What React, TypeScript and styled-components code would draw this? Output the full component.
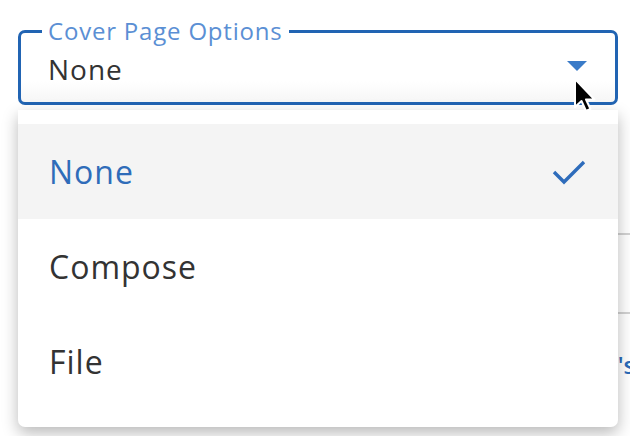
import styled, { createGlobalStyle } from "styled-components";

const options = ["None", "Compose", "File"];
const selected = "None";

function App() {
  return (
    <>
      <GlobalStyle />
      <Page>
        <Field>
          <Legend>Cover Page Options</Legend>
          <ValueRow>
            <Value>{selected}</Value>
            <Caret />
          </ValueRow>
        </Field>

        <Backdrop>
          <BackRow $height={128} />
          <BackRow $height={77} />
          <BackRow $height={100}>
            <BackLink>User's settings</BackLink>
          </BackRow>
        </Backdrop>

        <Menu>
          {options.map((o) => (
            <Option key={o} $active={o === selected}>
              {o}
              {o === selected && (
                <svg width="34" height="26" viewBox="0 0 34 26">
                  <path
                    d="M2 13 L12 23 L32 3"
                    fill="none"
                    stroke="#2e6cbb"
                    strokeWidth="3.4"
                  />
                </svg>
              )}
            </Option>
          ))}
        </Menu>

        <Cursor width="24" height="38" viewBox="0 0 24 38">
          <path
            d="M2 2 L2 30 L8.5 24 L13 34 L17.5 32 L13 22.5 L21.5 22.5 Z"
            fill="#000"
            stroke="#fff"
            strokeWidth="2"
            strokeLinejoin="round"
          />
        </Cursor>
      </Page>
    </>
  );
}

const GlobalStyle = createGlobalStyle`
  body {
    margin: 0;
    background: #fff;
    font-family: "Open Sans", "Noto Sans", sans-serif;
  }
`;

const Page = styled.div`
  position: relative;
  width: 630px;
  height: 436px;
  overflow: hidden;
  padding: 19px 0 0 18px;
  box-sizing: border-box;
`;

const Field = styled.fieldset`
  width: 600px;
  box-sizing: border-box;
  margin: 0;
  padding: 7px 28px 14px 27px;
  border: 3px solid #2164b3;
  border-radius: 7px;
  background: linear-gradient(to bottom, #fff 70%, #f6f6f6);
`;

const Legend = styled.legend`
  margin-left: -6px;
  padding: 0 6px;
  font-size: 24px;
  line-height: 24px;
  letter-spacing: 0.8px;
  color: #5b8fd4;
`;

const ValueRow = styled.div`
  display: flex;
  align-items: center;
  justify-content: space-between;
  height: 38px;
`;

const Value = styled.span`
  font-size: 28px;
  line-height: 38px;
  letter-spacing: 1px;
  color: #333;
`;

const Caret = styled.span`
  width: 0;
  height: 0;
  margin-top: -6px;
  border-left: 10px solid transparent;
  border-right: 10px solid transparent;
  border-top: 10px solid #3a7bc8;
`;

const Backdrop = styled.div`
  display: flex;
  flex-direction: column;
`;

const BackRow = styled.div<{ $height: number }>`
  height: ${(p) => p.$height}px;
  border-bottom: 2px solid #d2d2d2;
  display: flex;
  align-items: center;

  &:last-child {
    border-bottom: none;
  }
`;

const BackLink = styled.span`
  margin-left: 546px;
  white-space: nowrap;
  font-size: 24px;
  font-weight: 600;
  color: #2a6ab8;
`;

const Menu = styled.ul`
  position: absolute;
  top: 110px;
  left: 18px;
  width: 600px;
  margin: 0;
  padding: 14px 0 18px;
  list-style: none;
  background: #fff;
  border-radius: 0 0 7px 7px;
  box-shadow: 0 6px 16px rgba(0, 0, 0, 0.28);
`;

const Option = styled.li<{ $active: boolean }>`
  display: flex;
  align-items: center;
  justify-content: space-between;
  height: 95px;
  padding: 0 32px 0 31px;
  font-size: 32px;
  letter-spacing: 1px;
  color: ${(p) => (p.$active ? "#2f6cb9" : "#333")};
  background: ${(p) => (p.$active ? "#f4f4f4" : "transparent")};
`;

const Cursor = styled.svg`
  position: absolute;
  left: 573px;
  top: 77px;
`;

export default App;
